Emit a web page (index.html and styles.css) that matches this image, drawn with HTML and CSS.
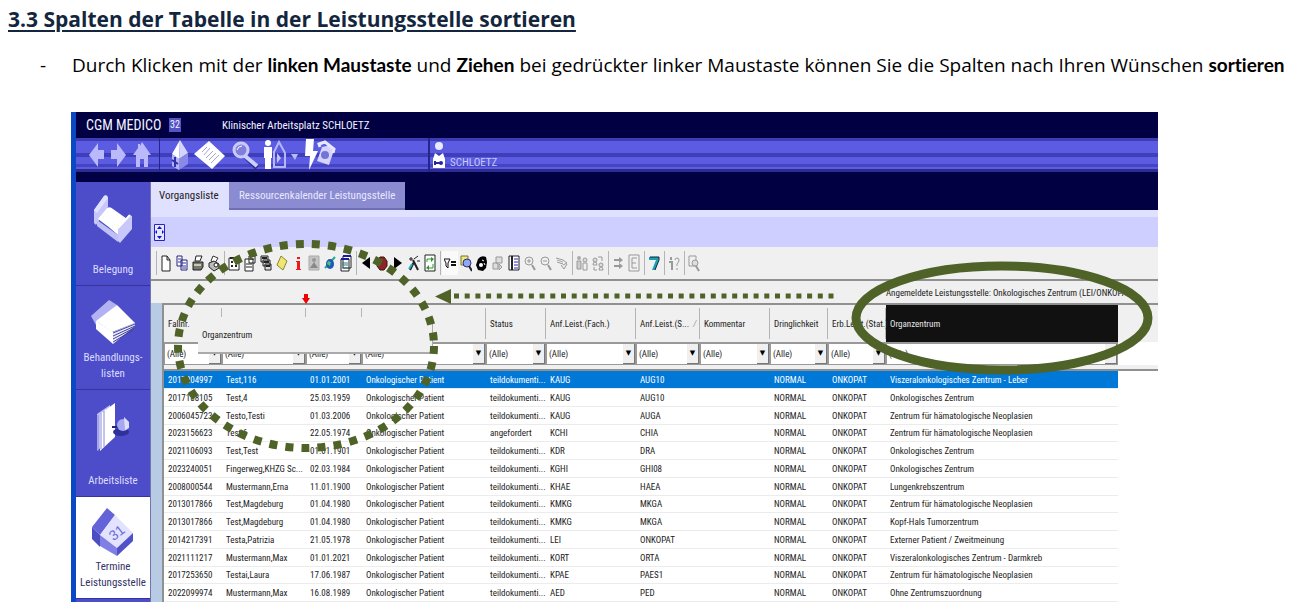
FILE: index.html
```
<!doctype html>
<html lang="de">
<head>
    <meta charset="utf-8">
    <title>Spalten der Tabelle sortieren</title>
    <link rel="stylesheet" href="styles.css">
</head>
<body>
    <h2>3.3 Spalten der Tabelle in der Leistungsstelle sortieren</h2>
    <ul class="steps">
        <li>Durch Klicken mit der <b>linken Maustaste</b> und <b>Ziehen</b> bei gedrückter linker Maustaste können Sie die Spalten nach Ihren Wünschen <b>sortieren</b></li>
    </ul>

    <div class="app">
        <header class="titlebar">
            <span class="brand">CGM MEDICO</span>
            <span class="badge">32</span>
            <span class="place">Klinischer Arbeitsplatz SCHLOETZ</span>
        </header>

        <div class="ribbon">
            <div class="ribbon-nav">
                <button aria-label="Zurück"><svg width="16" height="26" viewBox="0 0 16 26"><path d="M0 13 9 1v7h6v9H9v8z" fill="#b9b9fb"/></svg></button>
                <button aria-label="Vor"><svg width="16" height="26" viewBox="0 0 16 26"><path d="M15 13 6 1v7H0v9h6v8z" fill="#b9b9fb"/></svg></button>
                <button aria-label="Start"><svg width="18" height="26" viewBox="0 0 18 26"><path d="M9 0 18 13h-3v12h-4v-8H7v8H3V13H0L5 6V2h2v2z" fill="#b9b9fb"/></svg></button>
            </div>
            <div class="ribbon-tools">
                <button aria-label="Patient"><svg width="18" height="30" viewBox="0 0 18 30"><path d="M9 0 1 14l7 5z" fill="#fff"/><path d="M9 0 17 13 8 19z" fill="#d4d4fc"/><path d="M1 14l7 5v11l-7-4z" fill="#b4b4f4"/><path d="M8 19l9-6v11l-9 6z" fill="#8a8ae6"/><path d="M4 17v10M1 20l6 4" stroke="#3030a8" stroke-width="2"/></svg></button>
                <button aria-label="Akte"><svg width="32" height="30" viewBox="0 0 32 30"><path d="M0 14 15 1 31 16 18 29z" fill="#fff"/><path d="M8 12l5-5M10 15l6-7M12 18l7-7M15 20l7-7M17 23l8-8" stroke="#a4a4d8"/></svg></button>
                <button aria-label="Suchen"><svg width="28" height="30" viewBox="0 0 28 30"><path d="M15 17 26 28" stroke="#30309c" stroke-width="5"/><path d="M14 16 26 26" stroke="#cfcffc" stroke-width="4"/><circle cx="10" cy="10" r="7" fill="#8080dc" stroke="#c9c9fa" stroke-width="3"/><path d="M6 10q1-4 5-4" stroke="#fff" fill="none"/></svg></button>
                <button aria-label="Aufnahme"><svg width="22" height="30" viewBox="0 0 22 30"><circle cx="4" cy="3" r="3" fill="#fff"/><path d="M0 7h8v11H7v11H1V18H0z" fill="#fff"/><path d="M10 12 15 2l6 11v14H10z" fill="none" stroke="#b5b5fa" stroke-width="2"/><path d="M13 13l4 5-4 5z" fill="#c4c4fa"/></svg></button>
                <button aria-label="Mehr"><svg width="8" height="30" viewBox="0 0 8 30"><path d="M0 14h7l-3 6z" fill="#b9b9fb"/></svg></button>
                <button aria-label="Notfall"><svg width="32" height="32" viewBox="0 0 32 32"><path d="M2 0h8l-1 12h5L5 31l1-14H1z" fill="#fff"/><path d="M18 8 27 6 29 14 25 26 13 22z" fill="#d4d4fc"/><circle cx="21" cy="16" r="4" fill="#7474d8"/><path d="M16 8 15 5l6-2 9 7-1 4" fill="none" stroke="#e8e8ff" stroke-width="3"/></svg></button>
            </div>
            <div class="ribbon-user">
                <svg width="12" height="28" viewBox="0 0 12 28"><circle cx="6" cy="5" r="4" fill="#e9e9ff"/><path d="M2 12 6 15 10 12 12 18v9H0v-9z" fill="#fff"/><path d="M2 20v4M2 22h6" stroke="#26269c" stroke-width="2"/><circle cx="8" cy="22" r="2" fill="#26269c"/></svg>
                <span>SCHLOETZ</span>
            </div>
        </div>

        <div class="work">
            <nav class="side">
                <a href="#">
                    <svg width="38" height="48" viewBox="0 0 38 48"><path d="M0 15 10 1q3-2 4 2v9L2 30 0 28z" fill="#c6c6f8"/><path d="M0 15 10 1q3-2 4 2L3 18z" fill="#e0e0ff"/><path d="M4 24 13 13q3-2 6 1l17 12-12 14Q14 31 4 24z" fill="#fff"/><path d="M3 25 24 40v7L3 31z" fill="#c0c0f5"/><path d="M24 33 35 20l3 1v13L26 48l-2-2z" fill="#c8c8fa"/><path d="M24 33 36 20" stroke="#fff" stroke-width="2"/></svg>
                    <span>Belegung</span>
                </a>
                <a href="#">
                    <svg width="44" height="46" viewBox="0 0 44 46"><path d="M0 17 18 1l8 5L5 26z" fill="#b2b2f2"/><path d="M5 22 26 6 44 24 21 33z" fill="#fff"/><path d="M5 22v8l17 15V33z" fill="#fff"/><path d="M22 33 44 24v3L22 45z" fill="#e9e9ff"/><path d="M22 34 44 25M22 37 44 27M22 40 43 29M22 43 42 31" stroke="#444490"/></svg>
                    <span>Behandlungs-<br>listen</span>
                </a>
                <a href="#">
                    <svg width="34" height="50" viewBox="0 0 34 50"><path d="M1 11 14 2v34L1 48z" fill="#c1c1f6"/><path d="M4 11 19 0v34L4 48z" fill="#fff"/><path d="M2 12v36M5 10v36M8 8v36" stroke="#8888da"/><ellipse cx="25" cy="29" rx="8" ry="4" fill="#30309a"/><path d="M16 24h10" stroke="#26267c" stroke-width="2"/><circle cx="27" cy="22" r="6" fill="#a8a8f2"/><path d="M28 14l5 5v6l-4 2z" fill="#dedeff"/></svg>
                    <span>Arbeitsliste</span>
                </a>
                <a href="#" class="active">
                    <svg width="42" height="50" viewBox="0 0 42 50"><path d="M0 20 15 1l8 7L8 28z" fill="#6464d8"/><path d="M0 20 8 28v12L0 32z" fill="#4c4cc4"/><path d="M8 28 23 8 41 26 25 41z" fill="#e3e3ff"/><path d="M8 28 25 41v8L8 39z" fill="#7f7fe4"/><path d="M25 41 41 26v8L25 49z" fill="#5151c8"/><text x="17" y="31" transform="rotate(-38 24 26)" font-size="14" font-family="Liberation Sans, sans-serif" fill="#6e6ed6">31</text></svg>
                    <span>Termine<br>Leistungsstelle</span>
                </a>
            </nav>

            <main class="content">
                <div class="tabs">
                    <button class="tab current">Vorgangsliste</button>
                    <button class="tab">Ressourcenkalender Leistungsstelle</button>
                </div>
                <div class="panel">
                    <button aria-label="Vollbild"><svg width="11" height="17" viewBox="0 0 11 17"><path d="M.5.5h10v16H.5z" fill="#e6e6ff" stroke="#2222d0"/><path d="M5.500 2 8 5H3zM5.500 15 8 12H3zM1 8l2-2v4zM10 8 8 6v4z" fill="#1010d0"/></svg></button>
                </div>

                <div class="tools">
                    <i></i>
                    <button aria-label="Neu"><svg viewBox="0 0 12 18"><path d="M2 2h5l3 4v11H2zM7 2v4h3" fill="#fff" stroke="#222"/></svg></button>
                    <button aria-label="Kopieren"><svg viewBox="0 0 12 18"><path d="M1 2h5v10H1zM5 6h6v10H5z" fill="#fff" stroke="#222278"/><path d="M2 5h3M2 8h3M6 9h4M6 12h4M6 14h4" stroke="#3333a8"/></svg></button>
                    <button aria-label="Drucken"><svg viewBox="0 0 12 18"><path d="M4 2h6L8 7H3z" fill="#fff" stroke="#222"/><path d="M1 8h10v5l-2 3H1z" fill="#777" stroke="#222"/><path d="M2 11h7" stroke="#cccc9c" stroke-width="2"/></svg></button>
                    <button aria-label="Druckvorschau"><svg viewBox="0 0 12 18"><path d="M5 2l5 2-3 5-4-2z" fill="#fff" stroke="#333"/><path d="M1 9l5-2 5 3v4l-5 3-5-4z" fill="#bbb" stroke="#222"/><circle cx="8" cy="11" r="2" fill="#fff" stroke="#222"/></svg></button>
                    <i></i>
                    <button aria-label="Termin"><svg viewBox="0 0 12 18"><path d="M1 4h10v12H1z" fill="#fff" stroke="#222"/><path d="M2 4h9M3 8h2M7 8h2M3 12h2M7 12h2" stroke="#222" stroke-width="2"/></svg></button>
                    <button aria-label="Formular"><svg viewBox="0 0 12 18"><path d="M1 5h8v12H1zM5 2h6v7H5z" fill="#fff" stroke="#222"/><path d="M2 10h6M2 13h6M6 5h4" stroke="#222"/></svg></button>
                    <button aria-label="Stapel"><svg viewBox="0 0 12 18"><path d="M1 2h7v6H1zM3 6h7v6H3zM5 10h6v6H5z" fill="#ddd" stroke="#222"/><path d="M2 4h5M4 8h5M6 12h4" stroke="#222" stroke-width="2"/></svg></button>
                    <button aria-label="Notiz"><svg viewBox="0 0 12 18"><path d="M5 2l6 5-4 9-6-5z" fill="#efe774" stroke="#8c8430"/></svg></button>
                    <button aria-label="Info"><svg viewBox="0 0 12 18"><path d="M5 3h3v2H5zM4 7h4v8h1v1H4v-1h1V8H4z" fill="#f01818"/></svg></button>
                    <button aria-label="Bild"><svg viewBox="0 0 12 18"><path d="M1 2h10v14H1z" fill="#c4c4c4" stroke="#aaa"/><path d="M2 14l4-6 4 6z" fill="#888"/><circle cx="6" cy="6" r="2" fill="#999"/></svg></button>
                    <button aria-label="Web"><svg viewBox="0 0 12 18"><path d="M1 14 11 3" stroke="#2a8" stroke-width="2"/><ellipse cx="6" cy="10" rx="4" ry="5" fill="#1d5ab8"/><path d="M4 7l3 1-1 4-3-2z" fill="#4fc070"/></svg></button>
                    <button aria-label="Liste"><svg viewBox="0 0 12 18"><path d="M3 2h8v12H3zM1 5h8v12H1z" fill="#fff" stroke="#222"/><path d="M1 5h8M3 2h8" stroke="#1c1ca0" stroke-width="2"/><path d="M2 9h6M2 11h6M2 14h6" stroke="#2a7f7f"/></svg></button>
                    <i></i>
                    <button aria-label="Zurückblättern"><svg viewBox="0 0 12 18"><path d="M10 3v12L2 9z"/></svg></button>
                    <button aria-label="Stopp"><svg viewBox="0 0 12 18"><path d="M4 3h4l3 4v5l-3 4H4l-3-4V7z" fill="#8d2525" stroke="#3f1010"/></svg></button>
                    <button aria-label="Weiterblättern"><svg viewBox="0 0 12 18"><path d="M2 3v12l8-6z"/></svg></button>
                    <button aria-label="Assistent"><svg viewBox="0 0 12 18"><path d="M2 16 6 8M10 16 5 6" stroke="#222" stroke-width="2"/><path d="M6 5 10 2M9 7h3M3 3v4M1 5h4" stroke="#222"/><path d="M1 15 4 10" stroke="#28b0c8" stroke-width="2"/></svg></button>
                    <button aria-label="Aktualisieren"><svg viewBox="0 0 12 18"><path d="M1 1h10v16H1z" fill="#fff" stroke="#222"/><path d="M3 8V5h5M9 10v4H4" fill="none" stroke="#259a25" stroke-width="1"/><path d="M7 3l3 2-3 3zM5 11l-3 3 3 2z" fill="#259a25"/></svg></button>
                    <i></i>
                    <button class="pressed" aria-label="Filter"><svg viewBox="0 0 12 18"><path d="M0 5h6l-2 4v5L2 12V9z" fill="#fff" stroke="#111"/><path d="M7 8h5M7 11h5" stroke="#111" stroke-width="2"/></svg></button>
                    <button aria-label="Filter suchen"><svg viewBox="0 0 12 18"><path d="M1 2h7v9H1z" fill="#ece87c" stroke="#77742a"/><circle cx="7" cy="9" r="4" fill="#8fa8f0" stroke="#2d2d90"/><path d="M9 12l3 5" stroke="#222" stroke-width="2"/></svg></button>
                    <button aria-label="Telefon"><svg viewBox="0 0 12 18"><path d="M2 5q3-4 8-2l1 5-1 6-3 3-5-1-2-5z"/><path d="M6 6l2 1M8 9l1 2" stroke="#fff"/><circle cx="5" cy="11" r="2" fill="#fff"/></svg></button>
                    <button aria-label="Verknüpfen"><svg viewBox="0 0 12 18"><path d="M4 3h6v6H4zM1 9h5v6H1zM7 10l3 3-3 3z" fill="#ddd" stroke="#999"/></svg></button>
                    <button aria-label="Spalten"><svg viewBox="0 0 12 18"><path d="M1 2h10v14H1z" fill="#fff" stroke="#222"/><path d="M4 2v14" stroke="#222" stroke-width="2"/><path d="M6 5h4M6 8h4M6 11h4M6 14h4" stroke="#2626c8"/></svg></button>
                    <button aria-label="Vergrößern"><svg viewBox="0 0 12 18"><circle cx="5" cy="7" r="4" fill="none" stroke="#999"/><path d="M3 7h4M5 5v4" stroke="#999"/><path d="M8 11l3 5" stroke="#999" stroke-width="2"/></svg></button>
                    <button aria-label="Verkleinern"><svg viewBox="0 0 12 18"><circle cx="5" cy="7" r="4" fill="none" stroke="#999"/><path d="M3 7h4" stroke="#999"/><path d="M8 11l3 5" stroke="#999" stroke-width="2"/></svg></button>
                    <button aria-label="Zuweisen"><svg viewBox="0 0 12 18"><path d="M0 4l7 2 4 3-4 2M1 8l6 2M5 11l3 4 3-5" fill="none" stroke="#999"/><path d="M1 6l6 2" stroke="#aaa"/></svg></button>
                    <i></i>
                    <button aria-label="Personen"><svg viewBox="0 0 12 18"><circle cx="3" cy="4" r="2" fill="#aaa"/><path d="M1 7h4v8H1z" fill="#ccc" stroke="#999"/><circle cx="9" cy="6" r="2" fill="#ddd" stroke="#999"/><path d="M7 9h4v7H7z" fill="none" stroke="#999"/></svg></button>
                    <button aria-label="Tauschen"><svg viewBox="0 0 12 18"><circle cx="3" cy="6" r="2" fill="#ddd" stroke="#999"/><circle cx="9" cy="11" r="2" fill="#ddd" stroke="#999"/><path d="M7 16q0-3 2-3t2 3zM1 11q0-3 2-3t2 3zM6 3h4v4M5 16H2v-3" fill="none" stroke="#999"/></svg></button>
                    <i></i>
                    <button aria-label="Verschieben"><svg viewBox="0 0 12 18"><path d="M2 6h6M2 12h6" stroke="#999" stroke-width="2"/><path d="M7 3l4 3-4 3zM7 9l4 3-4 3z" fill="#999"/></svg></button>
                    <button aria-label="Eintrag"><svg viewBox="0 0 12 18"><path d="M1 1h10v16H1z" fill="none" stroke="#999"/><path d="M9 4H4v10h5M4 9h4" fill="none" stroke="#999"/></svg></button>
                    <i></i>
                    <button aria-label="Sieben"><svg viewBox="0 0 12 18"><path d="M1 3h10v2L7 16H4L8 6H1z" fill="#18a0b4"/><path d="M2 3h9v3L7 16" fill="none" stroke="#123"/></svg></button>
                    <i></i>
                    <button aria-label="Hilfe"><svg viewBox="0 0 12 18"><path d="M3 3v3M1 8h3v8" fill="none" stroke="#999" stroke-width="2"/><path d="M7 6q0-2 2-2t2 2q0 2-2 4v2M9 14v2" fill="none" stroke="#999"/></svg></button>
                    <i></i>
                    <button aria-label="Protokoll"><svg viewBox="0 0 12 18"><path d="M1 2h7v10H1z" fill="none" stroke="#999"/><circle cx="7" cy="9" r="3" fill="#ddd" stroke="#999"/><path d="M8 12l3 5" stroke="#999" stroke-width="2"/></svg></button>
                </div>

                <div class="status">Angemeldete Leistungsstelle: Onkologisches Zentrum (LEI/ONKOPAT)</div>

                <div class="grid">
                    <table>
                        <colgroup>
                            <col class="w58"><col class="w84"><col class="w56"><col class="w124"><col class="w60"><col class="w90"><col class="w64"><col class="w70"><col class="w58"><col class="w58"><col class="w232"><col>
                        </colgroup>
                        <thead>
                            <tr class="heads">
                                <th>Fallnr.</th><th></th><th></th><th></th><th>Status</th><th>Anf.Leist.(Fach.)</th><th>Anf.Leist.(S... <em>/</em></th><th>Kommentar</th><th>Dringlichkeit</th><th>Erb.Leist.(Stat.)</th><th class="dark">Organzentrum</th><th></th>
                            </tr>
                            <tr class="filters">
                                <td><div><select aria-label="Fallnr."><option>(Alle)</option></select></div></td>
                                <td><div><select aria-label="Name"><option>(Alle)</option></select></div></td>
                                <td><div><select aria-label="Geburtsdatum"><option>(Alle)</option></select></div></td>
                                <td><div><select aria-label="Patientenart"><option>(Alle)</option></select></div></td>
                                <td><div><select aria-label="Status"><option>(Alle)</option></select></div></td>
                                <td><div><select aria-label="Fach"><option>(Alle)</option></select></div></td>
                                <td><div><select aria-label="Stelle"><option>(Alle)</option></select></div></td>
                                <td><div><select aria-label="Kommentar"><option>(Alle)</option></select></div></td>
                                <td><div><select aria-label="Dringlichkeit"><option>(Alle)</option></select></div></td>
                                <td><div><select aria-label="Erbringer"><option>(Alle)</option></select></div></td>
                                <td><div><select aria-label="Organzentrum"><option>(Alle)</option></select></div></td>
                                <td></td>
                            </tr>
                        </thead>
                        <tbody>
                            <tr class="selected"><td>2017204997</td><td>Test,116</td><td>01.01.2001</td><td>Onkologischer Patient</td><td>teildokumenti...</td><td>KAUG</td><td>AUG10</td><td></td><td>NORMAL</td><td>ONKOPAT</td><td>Viszeralonkologisches Zentrum - Leber</td></tr>
                            <tr><td>2017188105</td><td>Test,4</td><td>25.03.1959</td><td>Onkologischer Patient</td><td>teildokumenti...</td><td>KAUG</td><td>AUG10</td><td></td><td>NORMAL</td><td>ONKOPAT</td><td>Onkologisches Zentrum</td></tr>
                            <tr><td>2006045723</td><td>Testo,Testi</td><td>01.03.2006</td><td>Onkologischer Patient</td><td>teildokumenti...</td><td>KAUG</td><td>AUGA</td><td></td><td>NORMAL</td><td>ONKOPAT</td><td>Zentrum für hämatologische Neoplasien</td></tr>
                            <tr><td>2023156623</td><td>Test,6</td><td>22.05.1974</td><td>Onkologischer Patient</td><td>angefordert</td><td>KCHI</td><td>CHIA</td><td></td><td>NORMAL</td><td>ONKOPAT</td><td>Zentrum für hämatologische Neoplasien</td></tr>
                            <tr><td>2021106093</td><td>Test,Test</td><td>01.01.1901</td><td>Onkologischer Patient</td><td>teildokumenti...</td><td>KDR</td><td>DRA</td><td></td><td>NORMAL</td><td>ONKOPAT</td><td>Onkologisches Zentrum</td></tr>
                            <tr><td>2023240051</td><td>Fingerweg,KHZG Sc...</td><td>02.03.1984</td><td>Onkologischer Patient</td><td>teildokumenti...</td><td>KGHI</td><td>GHI08</td><td></td><td>NORMAL</td><td>ONKOPAT</td><td>Onkologisches Zentrum</td></tr>
                            <tr><td>2008000544</td><td>Mustermann,Erna</td><td>11.01.1900</td><td>Onkologischer Patient</td><td>teildokumenti...</td><td>KHAE</td><td>HAEA</td><td></td><td>NORMAL</td><td>ONKOPAT</td><td>Lungenkrebszentrum</td></tr>
                            <tr><td>2013017866</td><td>Test,Magdeburg</td><td>01.04.1980</td><td>Onkologischer Patient</td><td>teildokumenti...</td><td>KMKG</td><td>MKGA</td><td></td><td>NORMAL</td><td>ONKOPAT</td><td>Zentrum für hämatologische Neoplasien</td></tr>
                            <tr><td>2013017866</td><td>Test,Magdeburg</td><td>01.04.1980</td><td>Onkologischer Patient</td><td>teildokumenti...</td><td>KMKG</td><td>MKGA</td><td></td><td>NORMAL</td><td>ONKOPAT</td><td>Kopf-Hals Tumorzentrum</td></tr>
                            <tr><td>2014217391</td><td>Testa,Patrizia</td><td>21.05.1978</td><td>Onkologischer Patient</td><td>teildokumenti...</td><td>LEI</td><td>ONKOPAT</td><td></td><td>NORMAL</td><td>ONKOPAT</td><td>Externer Patient / Zweitmeinung</td></tr>
                            <tr><td>2021111217</td><td>Mustermann,Max</td><td>01.01.2021</td><td>Onkologischer Patient</td><td>teildokumenti...</td><td>KORT</td><td>ORTA</td><td></td><td>NORMAL</td><td>ONKOPAT</td><td>Viszeralonkologisches Zentrum - Darmkreb</td></tr>
                            <tr><td>2017253650</td><td>Testai,Laura</td><td>17.06.1987</td><td>Onkologischer Patient</td><td>teildokumenti...</td><td>KPAE</td><td>PAES1</td><td></td><td>NORMAL</td><td>ONKOPAT</td><td>Zentrum für hämatologische Neoplasien</td></tr>
                            <tr><td>2022099974</td><td>Mustermann,Max</td><td>16.08.1989</td><td>Onkologischer Patient</td><td>teildokumenti...</td><td>AED</td><td>PED</td><td></td><td>NORMAL</td><td>ONKOPAT</td><td>Ohne Zentrumszuordnung</td></tr>
                        </tbody>
                    </table>
                </div>
            </main>
        </div>

        <!-- gezogene Spalte und Markierungen liegen über der Liste -->
        <div class="dragged">Organzentrum</div>
        <svg class="marks" width="1087" height="488" viewBox="71 112 1087 488">
            <path d="M304 294h4v4h2l-4 6-4-6h2z" fill="#f00000"/>
            <g fill="none" stroke="#4f6228">
                <ellipse cx="306" cy="346" rx="128" ry="102" stroke-width="8" stroke-dasharray="8 8.150"/>
                <path d="M454 296H838" stroke-width="5" stroke-dasharray="5 5.700"/>
                <ellipse cx="1002" cy="318" rx="146" ry="52" stroke-width="9"/>
            </g>
            <path d="M435 296.500 451 289v15z" fill="#4f6228"/>
        </svg>
    </div>
</body>
</html>
```
FILE: styles.css
```
html,body,ul,h2 {
    margin:0;
    padding:0;
}
body {
    background:#fff;
    color:#000;
    font-family:"Open Sans","Noto Sans",sans-serif;
    overflow-x:hidden;
}
button {
    display:flex;
    margin:0;
    padding:0;
    border:0;
    background:none;
    font:inherit;
    color:inherit;
}
a {
    color:inherit;
    text-decoration:none;
}
h2 {
    margin:3px 8px 0;
    font-size:21px;
    line-height:32px;
    color:#14263e;
    text-decoration:underline;
    text-decoration-thickness:2px;
    text-underline-offset:3px;
}
.steps {
    margin:16px 0 33px 40px;
    list-style:none;
}
.steps li {
    font-size:19px;
    line-height:28px;
    white-space:nowrap;
}
.steps li:before {
    content:'-';
    display:inline-block;
    width:32px;
}
.steps b {
    font-family:Lato,sans-serif;
    font-variant-ligatures:none;
}
.app {
    position:relative;
    margin:0 142px 0 71px;
    overflow:hidden;
    border-left:5px solid #0a48c6;
    background:#000042;
    color:#222;
    font-family:"Roboto Condensed","Liberation Sans",sans-serif;
    font-size:9px;
}

/* Kopf */
.titlebar {
    display:flex;
    align-items:center;
    height:26px;
    padding-left:10px;
    color:#f4f4ff;
    font-size:11px;
}
.brand {
    width:83px;
    font-size:14px;
}
.badge {
    width:12px;
    margin-right:41px;
    background:#5353c4;
    font-size:10px;
    line-height:14px;
    text-align:center;
}
.ribbon {
    display:flex;
    height:34px;
    margin-bottom:10px;
    background:linear-gradient(#3c3cb4 0 3px,#5c5ce2 3px 15px,#3f3fba 15px 19px,#5c5ce2 19px 26px,#4545c2 26px 29px,#5c5ce2 29px 31px,#2c2c92 31px);
}
.ribbon-nav {
    display:flex;
    align-items:center;
    gap:6px;
    width:84px;
    box-sizing:border-box;
    padding-left:13px;
    border-right:1px solid #26268a;
}
.ribbon-tools {
    display:flex;
    align-items:center;
    gap:5px;
    width:270px;
    box-sizing:border-box;
    padding-left:11px;
    border-right:2px solid #26268a;
}
.ribbon-user {
    display:flex;
    align-items:center;
    gap:5px;
    padding-left:3px;
    color:#c8c8fb;
    font-size:11px;
}
.ribbon-user span {
    padding-top:14px;
}

/* Seitenleiste */
.work {
    display:flex;
}
.side {
    width:74px;
    flex:none;
    background:#4d4dc9;
    color:#dcdcff;
    font-size:11px;
    line-height:16px;
    text-align:center;
}
.side a {
    display:flex;
    flex-direction:column;
    justify-content:space-between;
    align-items:center;
    height:104px;
    box-sizing:border-box;
    padding:13px 0 7px;
    border-bottom:1px solid #34349c;
}
.side a:nth-child(3) {
    height:107px;
}
.side .active {
    height:102px;
    padding:10px 0 7px;
    background:#fff;
    color:#333366;
}
.content {
    flex:1;
    min-width:0;
    border-left:1px solid #7474a8;
    background:#f0f0f0;
}

/* Reiter */
.tabs {
    display:flex;
    height:28px;
    background:#000042;
}
.tab {
    align-items:center;
    padding:0 10px;
    background:#8b8bd2;
    border-bottom:2px solid #6f6fb8;
    color:#e8e8ff;
    font-size:11px;
}
.current {
    width:78px;
    padding:0 8px;
    background:#e0e0ff;
    border-color:#e0e0ff;
    color:#222;
}
.panel {
    height:30px;
    padding:0 3px;
    border-top:7px solid #e0e0ff;
    background:#cfcfff;
}
.panel button {
    padding-top:7px;
}
.tools {
    display:flex;
    align-items:center;
    height:34px;
    padding-left:3px;
    box-sizing:border-box;
    border-bottom:2px solid #909090;
}
.tools button {
    width:16px;
    height:24px;
    align-items:center;
    justify-content:center;
}
.tools svg {
    width:12px;
    height:18px;
}
.tools i {
    width:1px;
    height:24px;
    margin:0 1px 0 2px;
    background:#b4b4b4;
}
.tools .pressed {
    background:#fafafa;
}
.status {
    height:22px;
    padding-right:24px;
    font-size:9px;
    line-height:24px;
    text-align:right;
}

/* Liste */
.grid {
    padding-left:11px;
    background:#b7cbe4;
}
table {
    width:100%;
    table-layout:fixed;
    border-collapse:separate;
    border-spacing:0;
    border-top:2px solid #909090;
    border-left:2px solid #909090;
    background:#fff;
}
th,td {
    padding:0 0 0 4px;
    text-align:left;
    white-space:nowrap;
    font-weight:normal;
}
.heads th {
    height:37px;
    background:linear-gradient(#b4b4b4,#b4b4b4) right 0 top 3px/1px 31px no-repeat #f0f0f0;
}
.heads th:last-child {
    background:#f0f0f0;
}
.heads em {
    padding-left:2px;
    color:#999;
}
.heads .dark {
    background:#111;
    color:#e8e8e8;
}
.filters td {
    height:27px;
    padding:0;
    vertical-align:top;
    border-bottom:2px solid #909090;
    background:#f0f0f0;
}
.filters td:last-child {
    background:linear-gradient(#fff 0 23px,#f0f0f0 23px);
}
.filters div {
    position:relative;
    border:1px solid #999;
    border-top-width:2px;
    background:#fff;
}
.filters select {
    display:block;
    width:100%;
    height:20px;
    padding:0 2px;
    border:0;
    background:none;
    appearance:none;
    color:#222;
    font:inherit;
}
.filters div:after {
    content:'▼';
    position:absolute;
    top:0;
    right:0;
    width:11px;
    height:19px;
    background:#f0f0f0;
    border-right:1px solid #777;
    border-bottom:1px solid #777;
    color:#000;
    font:7px/19px "DejaVu Sans",sans-serif;
    text-align:center;
    pointer-events:none;
}
tbody td {
    height:17px;
    border-bottom:1px solid #ececec;
}
tbody tr:nth-child(4n) td {
    height:16px;
}
.selected td {
    background:#0078d7;
    color:#fff;
}
.w58 { width:58px; }
.w84 { width:84px; }
.w56 { width:56px; }
.w124 { width:124px; }
.w60 { width:60px; }
.w90 { width:90px; }
.w64 { width:64px; }
.w70 { width:70px; }
.w232 { width:232px; }

.dragged {
    position:absolute;
    left:122px;
    top:205px;
    width:230px;
    height:35px;
    padding-left:4px;
    background:#f0f0f0;
    border-bottom:2px solid #aaa;
    border-right:1px solid #aaa;
    line-height:36px;
}
.marks {
    position:absolute;
    left:-5px;
    top:0;
    pointer-events:none;
}
```
